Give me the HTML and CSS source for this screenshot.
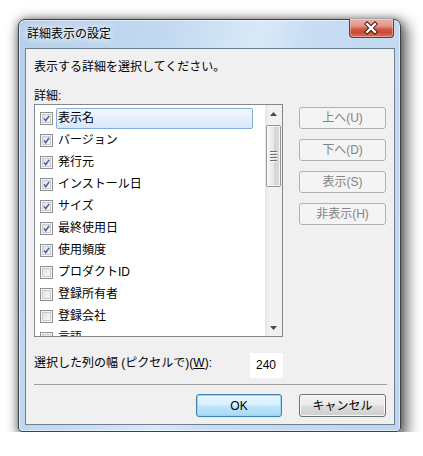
FILE: index.html
```html
<!DOCTYPE html>
<html lang="ja">
<head>
<meta charset="utf-8">
<title>詳細表示の設定</title>
<link rel="stylesheet" href="styles.css">
</head>
<body>
<div class="stage">
  <div class="window">
    <div class="titlebar">
      <span class="title">詳細表示の設定</span>
      <div class="close">
        <svg width="45" height="19" viewBox="0 0 45 19">
          <path d="M18.5 5 L26.5 13 M26.5 5 L18.5 13" stroke="#3d1712" stroke-width="4.4" stroke-linecap="square" fill="none"/>
          <path d="M18.5 5 L26.5 13 M26.5 5 L18.5 13" stroke="#ffffff" stroke-width="2.4" stroke-linecap="square" fill="none"/>
        </svg>
      </div>
    </div>
    <div class="client">
      <p class="instr">表示する詳細を選択してください。</p>
      <div class="label">詳細:</div>
      <div class="main">
        <div class="list">
          <ul class="items">
            <li class="item"><span class="cb"><svg viewBox="0 0 13 13"><path d="M3.6 6.4 L5.6 9.2 L9.6 3.4"/></svg></span><span class="txt focus">表示名</span></li>
            <li class="item"><span class="cb"><svg viewBox="0 0 13 13"><path d="M3.6 6.4 L5.6 9.2 L9.6 3.4"/></svg></span><span class="txt">バージョン</span></li>
            <li class="item"><span class="cb"><svg viewBox="0 0 13 13"><path d="M3.6 6.4 L5.6 9.2 L9.6 3.4"/></svg></span><span class="txt">発行元</span></li>
            <li class="item"><span class="cb"><svg viewBox="0 0 13 13"><path d="M3.6 6.4 L5.6 9.2 L9.6 3.4"/></svg></span><span class="txt">インストール日</span></li>
            <li class="item"><span class="cb"><svg viewBox="0 0 13 13"><path d="M3.6 6.4 L5.6 9.2 L9.6 3.4"/></svg></span><span class="txt">サイズ</span></li>
            <li class="item"><span class="cb"><svg viewBox="0 0 13 13"><path d="M3.6 6.4 L5.6 9.2 L9.6 3.4"/></svg></span><span class="txt">最終使用日</span></li>
            <li class="item"><span class="cb"><svg viewBox="0 0 13 13"><path d="M3.6 6.4 L5.6 9.2 L9.6 3.4"/></svg></span><span class="txt">使用頻度</span></li>
            <li class="item"><span class="cb"></span><span class="txt">プロダクトID</span></li>
            <li class="item"><span class="cb"></span><span class="txt">登録所有者</span></li>
            <li class="item"><span class="cb"></span><span class="txt">登録会社</span></li>
            <li class="item"><span class="cb"></span><span class="txt">言語</span></li>
          </ul>
          <div class="scroll">
            <div class="arrow">
              <svg width="7" height="4" viewBox="0 0 7 4"><path d="M0 4 L3.5 0 L7 4 Z" fill="#4a4a4a"/></svg>
            </div>
            <div class="thumb">
              <span class="grip"></span><span class="grip"></span><span class="grip"></span><span class="grip"></span>
            </div>
            <div class="track"></div>
            <div class="arrow">
              <svg width="7" height="4" viewBox="0 0 7 4"><path d="M0 0 L7 0 L3.5 4 Z" fill="#4a4a4a"/></svg>
            </div>
          </div>
        </div>
        <div class="side">
          <button class="btn disabled">上へ(U)</button>
          <button class="btn disabled">下へ(D)</button>
          <button class="btn disabled">表示(S)</button>
          <button class="btn disabled">非表示(H)</button>
        </div>
      </div>
      <div class="widthrow">
        <span class="wlabel">選択した列の幅 (ピクセルで)(<u>W</u>):</span>
        <div class="input">240</div>
      </div>
      <div class="sep"></div>
      <div class="actions">
        <button class="btn default">OK</button>
        <button class="btn cancel">キャンセル</button>
      </div>
    </div>
  </div>
</div>
</body>
</html>
```
FILE: styles.css
```css
html, body {
  margin: 0;
  padding: 0;
  background: #ffffff;
}

body {
  font-family: "Liberation Sans", "Noto Sans CJK JP", sans-serif;
  font-size: 12px;
  color: #000;
}

.stage {
  padding: 19px 0 0 18px;
}

.window {
  width: 383px;
  height: 413px;
  box-sizing: border-box;
  border: 1px solid #3a424a;
  border-radius: 7px 7px 4px 4px;
  padding: 0 5px 6px 6px;
  display: flex;
  flex-direction: column;
  background: linear-gradient(105deg, #b6cfea 0%, #c2d9f1 30%, #d9e9f8 50%, #c8ddf3 60%, #bdd5ee 100%);
  box-shadow: inset 0 0 0 1px rgba(255, 255, 255, 0.55), 4px 5px 14px 3px rgba(0, 0, 0, 0.55), 0 0 7px rgba(0, 0, 0, 0.35);
}

.titlebar {
  height: 28px;
  display: flex;
  align-items: flex-start;
  flex: none;
}

.title {
  padding-left: 2px;
  line-height: 28px;
  text-shadow: 0 0 6px #fff, 0 0 10px #fff;
}

.close {
  margin-left: auto;
  margin-right: 1px;
  margin-top: -1px;
  width: 45px;
  height: 19px;
  box-sizing: border-box;
  border: 1px solid #7b3127;
  border-top: none;
  border-radius: 0 0 4px 4px;
  background: linear-gradient(#eab4a8 0%, #e19585 40%, #cf5a44 55%, #c94a35 75%, #d8755e 100%);
  box-shadow: inset 0 0 0 1px rgba(255, 220, 210, 0.45);
  display: flex;
}

.close svg {
  display: block;
  margin-left: -1px;
}

.client {
  flex: 1;
  background: #f0f0f0;
  border: 1px solid #6d7f92;
  padding: 0 7px 7px 8px;
  display: flex;
  flex-direction: column;
}

.instr {
  margin: 10px 0 0 0;
  line-height: 16px;
}

.label {
  margin-top: 13px;
  line-height: 16px;
}

.main {
  display: flex;
  align-items: flex-start;
}

.list {
  width: 249px;
  height: 233px;
  box-sizing: border-box;
  border: 1px solid #828790;
  background: #fff;
  display: flex;
  overflow: hidden;
}

.items {
  flex: 1;
  list-style: none;
  margin: 0;
  padding: 2px 0 0 0;
  overflow: hidden;
}

.item {
  height: 22px;
  display: flex;
  align-items: center;
  padding-left: 5px;
}

.cb {
  width: 13px;
  height: 13px;
  box-sizing: border-box;
  border: 1px solid #8e8f8f;
  background: #f4f4f4;
  box-shadow: inset 0 0 0 1px #f7f7f7, inset 0 0 0 2px #c9cbcd;
  background-image: linear-gradient(135deg, #d5d6d8 0%, #eeeeee 50%, #fbfbfb 100%);
  flex: none;
}

.cb svg {
  display: block;
  width: 11px;
  height: 11px;
}

.cb path {
  fill: none;
  stroke: #4a5c98;
  stroke-width: 1.8;
}

.txt {
  margin-left: 3px;
  height: 21px;
  line-height: 19px;
  box-sizing: border-box;
  border: 1px solid transparent;
  padding-left: 1px;
  white-space: nowrap;
}

.txt.focus {
  width: 197px;
  border-color: #84acdd;
  border-radius: 2px;
  background: linear-gradient(#f2f7fe, #d8e7fb);
}

.scroll {
  width: 17px;
  flex: none;
  display: flex;
  flex-direction: column;
  align-items: center;
  background: linear-gradient(90deg, #e6e6e6 0%, #f2f2f2 30%, #f0f0f0 100%);
}

.arrow {
  height: 18px;
  width: 17px;
  display: flex;
  align-items: center;
  justify-content: center;
}

.arrow:last-child {
  height: 16px;
}

.thumb {
  margin-top: 2px;
  width: 15px;
  height: 62px;
  box-sizing: border-box;
  border: 1px solid #979797;
  border-radius: 2px;
  background: linear-gradient(90deg, #f5f5f5 0%, #e8e8e8 50%, #d4d4d4 52%, #dcdcdc 100%);
  box-shadow: inset 0 0 0 1px rgba(255, 255, 255, 0.7);
  display: flex;
  flex-direction: column;
  align-items: center;
  justify-content: center;
  gap: 1px;
}

.grip {
  width: 7px;
  height: 1px;
  background: #6e6e6e;
  border-bottom: 1px solid #f8f8f8;
}

.track {
  flex: 1;
}

.side {
  margin-left: 16px;
  padding-top: 3px;
  display: flex;
  flex-direction: column;
  gap: 10px;
}

.btn {
  font: inherit;
  margin: 0;
  padding: 0;
  width: 87px;
  height: 22px;
  box-sizing: border-box;
  border-radius: 3px;
  line-height: 18px;
  text-align: center;
}

.btn.disabled {
  border: 1px solid #adb2b5;
  background: #f4f4f4;
  color: #838383;
}

.widthrow {
  margin-top: 16px;
  width: 249px;
  display: flex;
  justify-content: space-between;
  align-items: flex-start;
}

.wlabel {
  line-height: 16px;
  margin-top: 2px;
  white-space: nowrap;
}

.input {
  width: 33px;
  height: 25px;
  box-sizing: border-box;
  background: #fff;
  padding-left: 6px;
  line-height: 25px;
}

.sep {
  margin-top: 6px;
  height: 1px;
  background: #a0a0a0;
}

.actions {
  margin-top: 9px;
  display: flex;
  justify-content: flex-end;
  gap: 17px;
  padding-right: 1px;
}

.btn.default {
  width: 86px;
  height: 23px;
  border: 1px solid #3c7fb1;
  background: linear-gradient(#eaf6fd 0%, #d9f0fc 48%, #bee6fd 52%, #a7d9f5 100%);
  box-shadow: inset 0 0 0 1px #98d7f5;
  color: #000;
}

.btn.cancel {
  height: 23px;
  border: 1px solid #707070;
  background: linear-gradient(#f2f2f2 0%, #ebebeb 48%, #dddddd 52%, #cfcfcf 100%);
  box-shadow: inset 0 0 0 1px rgba(255, 255, 255, 0.8);
  color: #000;
}
```
